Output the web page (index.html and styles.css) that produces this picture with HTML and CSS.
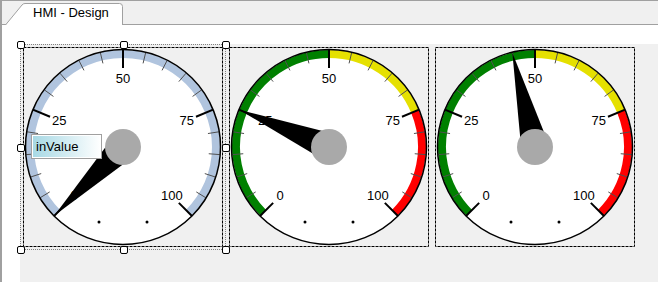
FILE: index.html
```html
<!DOCTYPE html>
<html lang="en">
<head>
  <meta charset="UTF-8">
  <title>HMI - Design</title>
  <link rel="stylesheet" href="styles.css">
</head>
<body>

  <div class="window">
    <div class="tabstrip">
      <div class="tab">
        <svg class="tab-shape" width="118" height="22" viewBox="0 0 118 22">
          <path d="M0.5 22 L17 2 Q18.2 0.5 20 0.5 L114.5 0.5 Q117.5 0.5 117.5 3.5 L117.5 22"/>
        </svg>
        <span class="tab-label">HMI - Design</span>
      </div>
    </div>

    <div class="designer">
      <div class="surface">
        <div class="gauge selected" data-value="0" data-scheme="plain">
          <svg width="200" height="200" viewBox="0 0 200 200"></svg>
          <span class="handle tl"></span>
          <span class="handle tc"></span>
          <span class="handle tr"></span>
          <span class="handle ml"></span>
          <span class="handle mr"></span>
          <span class="handle bl"></span>
          <span class="handle bc"></span>
          <span class="handle br"></span>
          <div class="tip">inValue</div>
        </div>
        <div class="gauge" data-value="25" data-scheme="zones">
          <svg width="200" height="200" viewBox="0 0 200 200"></svg>
        </div>
        <div class="gauge" data-value="45" data-scheme="zones">
          <svg width="200" height="200" viewBox="0 0 200 200"></svg>
        </div>
      </div>
    </div>
  </div>

  <script>
    const NS = 'http://www.w3.org/2000/svg';

    // colour bands per gauge type
    const schemes = {
      plain: [{ from: 0, to: 100, color: '#b0c4de' }],
      zones: [
        { from: 0, to: 50, color: '#008000' },
        { from: 50, to: 75, color: '#e5e000' },
        { from: 75, to: 100, color: '#ff0000' }
      ]
    };

    function el(name, attrs, parent) {
      const node = document.createElementNS(NS, name);
      for (const key in attrs) node.setAttribute(key, attrs[key]);
      parent.appendChild(node);
      return node;
    }

    // 0 sits at lower left, 100 at lower right, 270 degree sweep
    function angle(v) {
      return (225 - 2.7 * v) * Math.PI / 180;
    }

    function polar(r, v) {
      const a = angle(v);
      return [100 + r * Math.cos(a), 100 - r * Math.sin(a)];
    }

    function arc(r, from, to) {
      const [x1, y1] = polar(r, from);
      const [x2, y2] = polar(r, to);
      const large = (to - from) * 2.7 > 180 ? 1 : 0;
      return `M${x1} ${y1} A${r} ${r} 0 ${large} 1 ${x2} ${y2}`;
    }

    function tick(v, r1, r2, cls, svg) {
      const [x1, y1] = polar(r1, v);
      const [x2, y2] = polar(r2, v);
      el('line', { x1, y1, x2, y2, class: cls }, svg);
    }

    document.querySelectorAll('.gauge').forEach(gauge => {
      const svg = gauge.querySelector('svg');
      const value = Number(gauge.dataset.value);

      el('rect', { x: 0.5, y: 0.5, width: 199, height: 199, class: 'frame' }, svg);
      el('circle', { cx: 100, cy: 100, r: 97.5, class: 'face' }, svg);

      schemes[gauge.dataset.scheme].forEach(band => {
        el('path', { d: arc(93, band.from, band.to), stroke: band.color, class: 'band' }, svg);
      });

      for (let v = 5; v < 100; v += 5) {
        if (v % 25) tick(v, 86, 97, 'minor', svg);
      }
      for (let v = 0; v <= 100; v += 25) {
        tick(v, 79, 97.5, 'major', svg);
        const [x, y] = polar(69, v);
        el('text', { x, y, class: 'label' }, svg).textContent = v;
      }

      el('circle', { cx: 100, cy: 100, r: 97.5, class: 'rim' }, svg);
      el('circle', { cx: 76, cy: 175, r: 1.5, class: 'dot' }, svg);
      el('circle', { cx: 124, cy: 175, r: 1.5, class: 'dot' }, svg);

      // needle: tip on the rim, wide base at the hub
      const a = angle(value);
      const [tx, ty] = polar(97, value);
      const dx = 14 * Math.sin(a);
      const dy = 14 * Math.cos(a);
      el('polygon', {
        points: `${tx},${ty} ${100 + dx},${100 + dy} ${100 - dx},${100 - dy}`,
        class: 'needle'
      }, svg);
      el('circle', { cx: 100, cy: 100, r: 18, class: 'hub' }, svg);
    });
  </script>
</body>
</html>
```

FILE: styles.css
```css
* {
  margin: 0;
  padding: 0;
  box-sizing: border-box;
}

body {
  font-family: "Liberation Sans", Arial, sans-serif;
  width: 658px;
  height: 282px;
  background-color: #fff;
  overflow: hidden;
}

.window {
  height: 282px;
  border-top: 1px solid #a0a0a0;
  border-left: 2px solid #a0a0a0;
  display: flex;
  flex-direction: column;
}

.tabstrip {
  height: 24px;
  background-color: #f0f0f0;
  border-bottom: 1px solid #a0a0a0;
  display: flex;
  align-items: flex-end;
  padding-left: 3px;
}

.tab {
  position: relative;
  width: 118px;
  height: 22px;
  margin-bottom: -1px;
  padding-left: 28px;
  font-size: 13px;
  line-height: 20px;
  color: #000;
}

.tab-shape {
  position: absolute;
  left: 0;
  top: 0;
}

.tab-shape path {
  fill: #fff;
  stroke: #a0a0a0;
  stroke-width: 1;
}

.tab-label {
  position: relative;
}

.designer {
  flex: 1;
  padding: 19px 0 0 18px;
}

.surface {
  height: 100%;
  background-color: #f0f0f0;
  display: flex;
  align-items: flex-start;
  gap: 6px;
  padding: 3px 0 0 3px;
}

.gauge {
  position: relative;
  width: 200px;
  height: 200px;
  flex: 0 0 200px;
}

.gauge svg {
  display: block;
}

.frame {
  fill: none;
  stroke: #000;
  stroke-width: 1;
  stroke-dasharray: 3 1;
}

.face {
  fill: #fff;
}

.band {
  fill: none;
  stroke-width: 8;
}

.minor {
  stroke: #505050;
  stroke-width: 1;
}

.major {
  stroke: #000;
  stroke-width: 2;
}

.label {
  font-family: "Liberation Sans", Arial, sans-serif;
  font-size: 13px;
  text-anchor: middle;
  dominant-baseline: central;
  fill: #000;
}

.rim {
  fill: none;
  stroke: #000;
  stroke-width: 1.5;
}

.dot,
.needle {
  fill: #000;
}

.hub {
  fill: #a9a9a9;
}

/* selection frame of the active control */
.selected::before {
  content: "";
  position: absolute;
  inset: -3px;
  border: 1px dotted #808080;
}

.handle {
  position: absolute;
  width: 8px;
  height: 8px;
  margin: -3px 0 0 -3px;
  background-color: #fff;
  border: 1px solid #000;
  border-radius: 2px;
}

.tl { left: -3px; top: -3px; }
.tc { left: 100px; top: -3px; }
.tr { left: 202px; top: -3px; }
.ml { left: -3px; top: 100px; }
.mr { left: 202px; top: 100px; }
.bl { left: -3px; top: 202px; }
.bc { left: 100px; top: 202px; }
.br { left: 202px; top: 202px; }

.tip {
  position: absolute;
  left: 8px;
  top: 87px;
  width: 71px;
  height: 25px;
  padding-left: 4px;
  border: 1px solid #a0a0a0;
  box-shadow: inset 0 0 0 1px #fff;
  background: linear-gradient(to right, #a6d8e4, #fff);
  font-size: 13px;
  line-height: 23px;
  color: #000;
}
```
